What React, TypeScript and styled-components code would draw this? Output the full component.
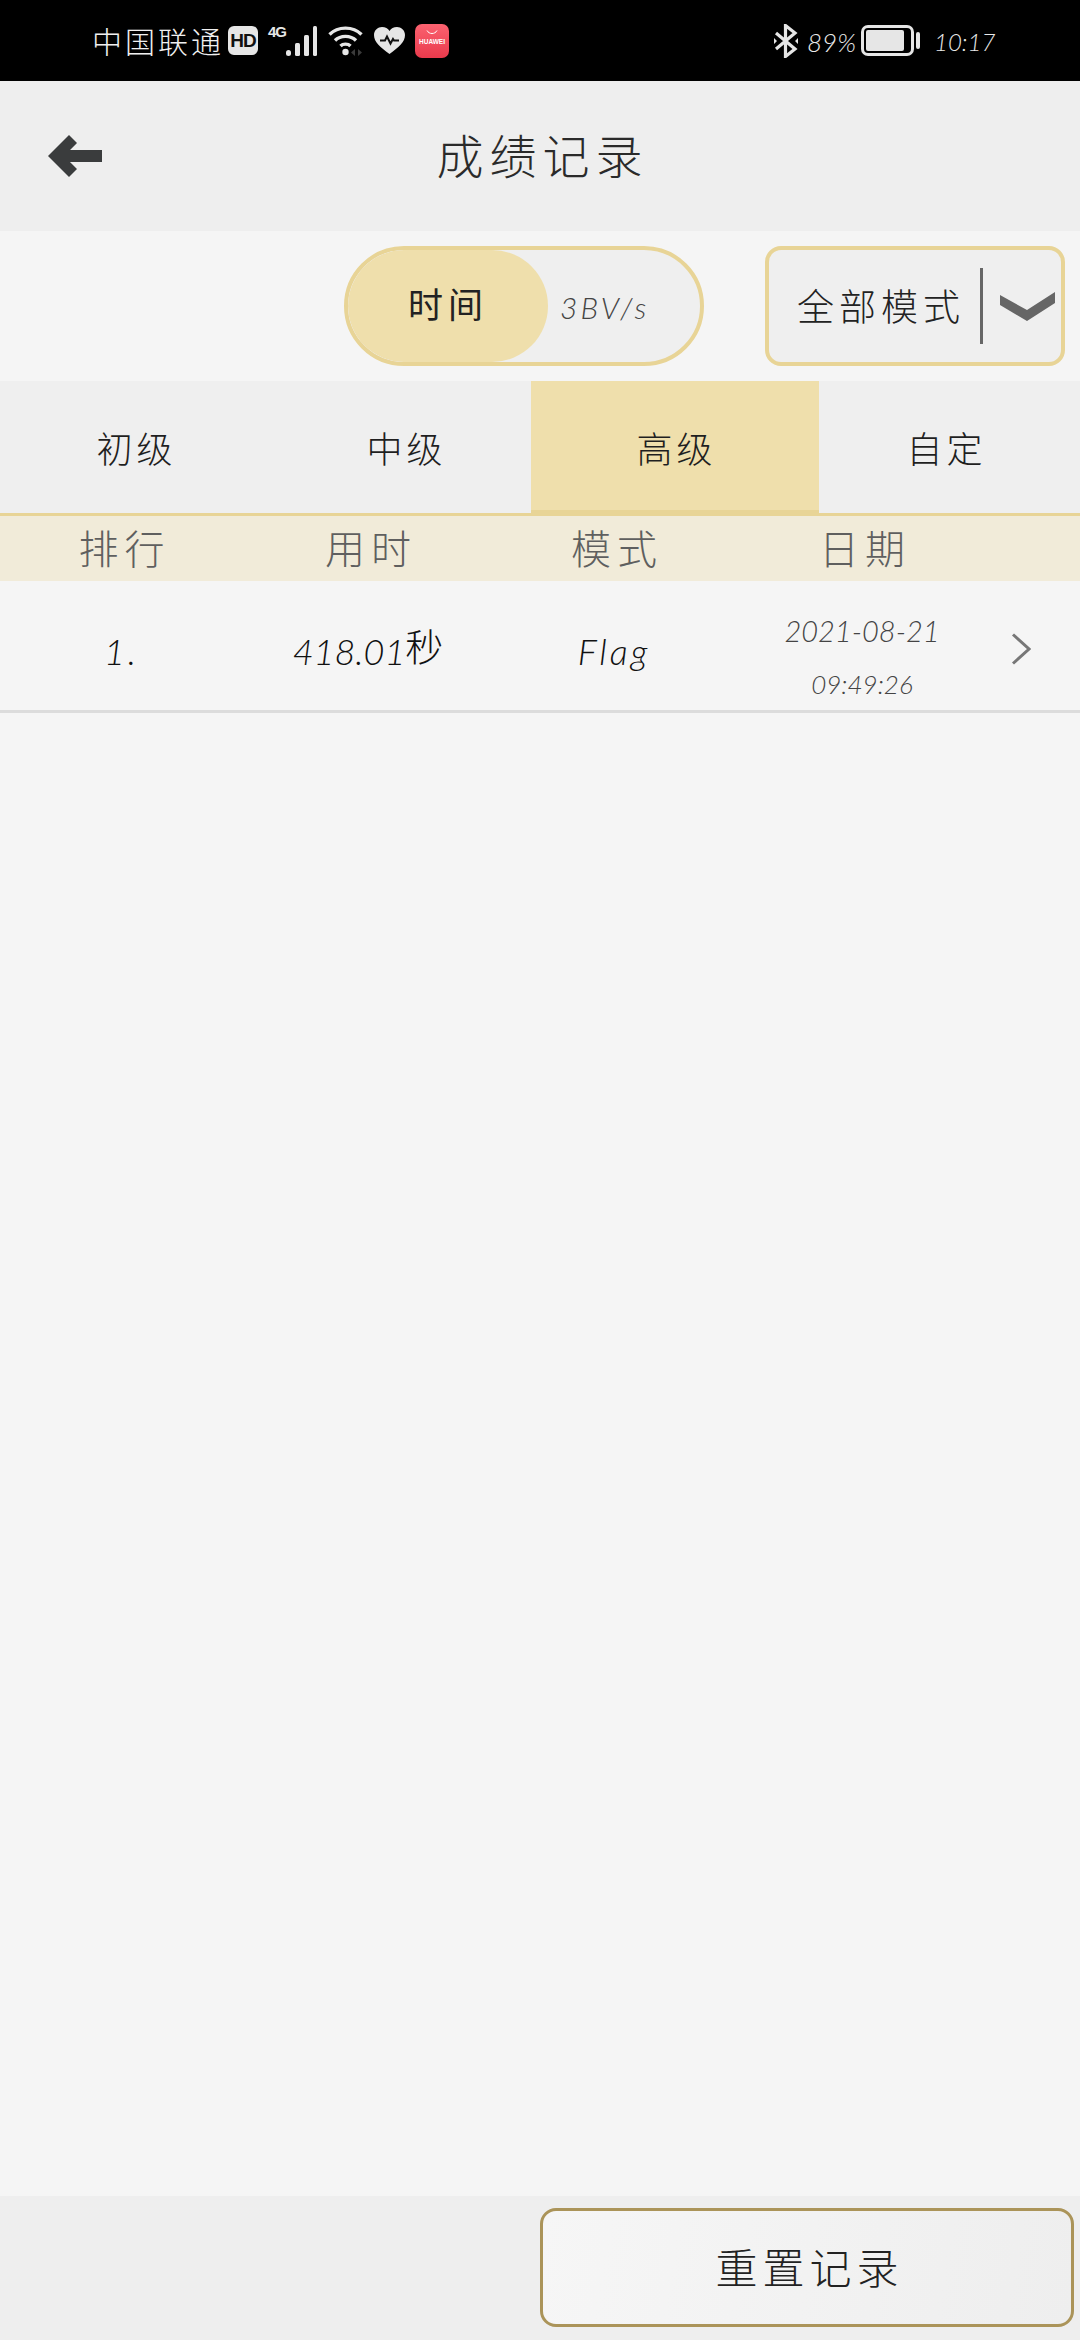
import React from "react";
import styled, { createGlobalStyle } from "styled-components";

const cjk = `"Noto Sans CJK SC", "Noto Sans", sans-serif`;
const latin = `"Lato", "Noto Sans CJK SC", sans-serif`;

const Global = createGlobalStyle`
  html, body { margin: 0; padding: 0; background: #f5f5f5; }
  * { box-sizing: border-box; }
`;

const Page = styled.div`
  width: 1080px;
  height: 2340px;
  display: flex;
  flex-direction: column;
  background: #f5f5f5;
  color: #2c2c2c;
  font-family: ${cjk};
`;

const StatusBar = styled.div`
  height: 81px;
  flex: none;
  background: #000;
  display: flex;
  align-items: center;
  justify-content: space-between;
  padding: 0 89px 0 92px;
`;

const StatusGroup = styled.div`
  display: flex;
  align-items: center;
`;

const Carrier = styled.span`
  width: 136px;
  padding-bottom: 2px;
  font-size: 30px;
  line-height: 38px;
  font-weight: 300;
  letter-spacing: 3px;
  color: #f0f0f0;
  white-space: nowrap;
`;

const HdBadge = styled.span`
  width: 30px;
  height: 29px;
  border-radius: 6px;
  background: #e6e6e6;
  color: #111;
  font: 700 19px/29px "Liberation Sans", sans-serif;
  letter-spacing: -1px;
  text-align: center;
`;

const NetLabel = styled.span`
  align-self: flex-start;
  margin: 3px 0 0 10px;
  width: 18px;
  color: #e6e6e6;
  font: 700 15px/16px "Liberation Sans", sans-serif;
  letter-spacing: -1px;
  white-space: nowrap;
`;

const Svg = styled.svg<{ $ml: number }>`
  display: block;
  flex: none;
  margin-left: ${(p) => p.$ml}px;
`;

const HuaweiTile = styled.div`
  width: 34px;
  height: 34px;
  margin-left: 10px;
  border-radius: 7px;
  background: linear-gradient(180deg, #fb6270, #ea3a4c);
  display: flex;
  flex-direction: column;
  align-items: center;
  padding-top: 6px;
`;

const HuaweiWord = styled.span`
  color: #fff;
  font: 700 6.5px/8px "Liberation Sans", sans-serif;
  margin-top: 3px;
`;

const StatusNum = styled.span<{ $ml: number; $w: number; $size: number }>`
  margin-left: ${(p) => p.$ml}px;
  width: ${(p) => p.$w}px;
  padding-top: 2px;
  color: #eaeaea;
  font: italic 300 ${(p) => p.$size}px/30px ${latin};
  white-space: nowrap;
`;

const Battery = styled.div`
  width: 53px;
  height: 31px;
  margin-left: 10px;
  border: 3px solid #e6e6e6;
  border-radius: 7px;
  padding: 2px 7px 2px 2px;
`;

const BatteryFill = styled.div`
  height: 100%;
  background: #e6e6e6;
  border-radius: 2px;
`;

const BatteryTip = styled.div`
  width: 4px;
  height: 17px;
  margin-left: 2px;
  background: #e6e6e6;
  border-radius: 2px;
`;

const Header = styled.header`
  height: 150px;
  flex: none;
  background: #eee;
  display: flex;
  align-items: center;
  justify-content: center;
  position: relative;
`;

const BackIcon = styled.svg`
  position: absolute;
  left: 48px;
  top: 54px;
`;

const Title = styled.h1`
  margin: -5px 0 0 5px;
  font-size: 47px;
  line-height: 60px;
  font-weight: 300;
  letter-spacing: 6px;
  color: #2a2a2a;
`;

const Controls = styled.div`
  height: 150px;
  flex: none;
  display: flex;
  align-items: center;
  justify-content: flex-end;
  gap: 61px;
  padding-right: 15px;
`;

const Pill = styled.div`
  width: 360px;
  height: 120px;
  border: 4px solid #e8d496;
  border-radius: 60px;
  background: #efefef;
  display: flex;
  align-items: center;
  overflow: hidden;
`;

const Knob = styled.div`
  width: 200px;
  height: 100%;
  border-radius: 56px;
  background: #efdfac;
  display: flex;
  align-items: center;
  justify-content: center;
  padding-bottom: 7px;
  font-size: 35px;
  font-weight: 400;
  letter-spacing: 5px;
  color: #222;
`;

const PillOption = styled.span`
  margin-left: 12px;
  color: #444;
  font: italic 300 30px/40px ${latin};
  letter-spacing: 3px;
  padding-top: 1px;
`;

const Select = styled.div`
  width: 300px;
  height: 120px;
  border: 4px solid #e8d496;
  border-radius: 16px;
  background: #efefef;
  display: flex;
  align-items: center;
`;

const SelectLabel = styled.span`
  width: 211px;
  padding: 0 0 3px 28px;
  font-size: 37px;
  font-weight: 300;
  letter-spacing: 5px;
  color: #222;
  white-space: nowrap;
`;

const SelectDivider = styled.div`
  width: 3px;
  height: 76px;
  background: #666;
`;

const Tabs = styled.nav`
  height: 135px;
  flex: none;
  display: grid;
  grid-template-columns: repeat(4, 270px);
  background: #efefef;
  border-bottom: 3px solid #e8d496;
`;

const Tab = styled.div<{ $active?: boolean }>`
  display: flex;
  align-items: center;
  justify-content: center;
  font-size: 36px;
  font-weight: 300;
  letter-spacing: 4px;
  padding-left: 3px;
  color: #1f1f1f;
  ${(p) =>
    p.$active &&
    `
    margin: 0 -9px;
    background: #efdfac;
    box-shadow: inset 0 -3px 0 #e8d496;
  `}
`;

const Columns = styled.div`
  display: grid;
  grid-template-columns: 243px 250px 242px 254px 1fr;
  align-items: center;
  text-align: center;
`;

const TableHead = styled(Columns)`
  height: 65px;
  flex: none;
  background: #f1ebd9;
  font-size: 40px;
  font-weight: 300;
  letter-spacing: 6px;
  color: #5f5f5f;
`;

const HeadCell = styled.span`
  padding: 0 0 3px 6px;
`;

const Row = styled(Columns)`
  height: 132px;
  flex: none;
  border-bottom: 3px solid #dcdcdc;
  color: #111;
`;

const Cell = styled.div<{ $spacing: number }>`
  padding-top: 10px;
  font: italic 300 36px/48px ${latin};
  letter-spacing: ${(p) => p.$spacing}px;
  white-space: nowrap;
`;

const Seconds = styled.span`
  font: normal 300 38px/40px ${cjk};
  letter-spacing: 0;
  position: relative;
  top: -4px;
`;

const DateCell = styled.div`
  display: flex;
  flex-direction: column;
  align-items: center;
  gap: 18px;
  padding-top: 20px;
  color: #444;
  font-style: italic;
  font-weight: 300;
  font-family: ${latin};
`;

const DateLine = styled.span`
  font-size: 29px;
  line-height: 38px;
`;

const TimeLine = styled.span`
  font-size: 26px;
  line-height: 32px;
`;

const RowArrow = styled.svg`
  display: block;
  margin: 6px 0 0 22px;
`;

const Spacer = styled.main`
  flex: 1;
`;

const Footer = styled.footer`
  height: 144px;
  flex: none;
  background: #eee;
  display: flex;
  justify-content: flex-end;
  padding: 12px 6px 13px 0;
`;

const ResetButton = styled.button`
  width: 534px;
  height: 119px;
  border: 3px solid #ab9459;
  border-radius: 16px;
  background: linear-gradient(100deg, #f6f6f6, #eeeeee);
  font-family: ${cjk};
  font-size: 42px;
  font-weight: 300;
  letter-spacing: 5px;
  color: #222;
  padding: 0 0 4px 5px;
`;

export default function App() {
  return (
    <Page>
      <Global />
      <StatusBar>
        <StatusGroup>
          <Carrier>中国联通</Carrier>
          <HdBadge>HD</HdBadge>
          <NetLabel>4G</NetLabel>
          <Svg $ml={0} width="32" height="30" viewBox="0 0 32 30" fill="#e6e6e6">
            <rect x="0" y="24" width="5" height="6" rx="2.5" />
            <rect x="9" y="17" width="5" height="13" rx="1.5" />
            <rect x="18" y="9" width="5" height="21" rx="1.5" />
            <rect x="27" y="0" width="4" height="30" rx="1.5" />
          </Svg>
          <Svg $ml={10} width="36" height="32" viewBox="0 0 36 32" fill="none" stroke="#e6e6e6" strokeWidth="3.4">
            <path d="M1.5 9.5C10 1 25 1 33.5 9.5" />
            <path d="M7 15.5C12.5 10 22.5 10 28 15.5" />
            <path d="M12.5 21C15 18.5 20 18.5 22.5 21" />
            <circle cx="17.5" cy="27" r="3.2" fill="#e6e6e6" stroke="none" />
            <path d="M27 24v7l-4-3.5zM30 24v7l4-3.5z" fill="#3a3a3a" stroke="none" />
          </Svg>
          <Svg $ml={10} width="31" height="27" viewBox="0 0 31 27">
            <path d="M15.5 27C6 20 0 15 0 8 0 3 4 0 8 0c3.300 0 6 1.500 7.500 4C17 1.500 19.700 0 23 0c4 0 8 3 8 8 0 7-6 12-15.500 19z" fill="#e6e6e6" />
            <path d="M6 13.500h5l2-4 3.500 7 2.500-4.500 1 1.500h5" fill="none" stroke="#111" strokeWidth="2" />
          </Svg>
          <HuaweiTile>
            <svg width="12" height="5" viewBox="0 0 12 5" fill="none" stroke="#fff" strokeWidth="1">
              <path d="M1 0.500C3 4.500 9 4.500 11 0.500" />
            </svg>
            <HuaweiWord>HUAWEI</HuaweiWord>
          </HuaweiTile>
        </StatusGroup>
        <StatusGroup>
          <Svg $ml={0} width="24" height="34" viewBox="0 0 24 34" fill="none" stroke="#e6e6e6" strokeWidth="3.200">
            <path d="M2 9l19 16-9.500 7.500V1.500L21 9 2 25" />
            <path d="M0 14v6l3-3zM24 14v6l-3-3z" fill="#e6e6e6" stroke="none" />
          </Svg>
          <StatusNum $ml={9} $w={44} $size={26}>89%</StatusNum>
          <Battery>
            <BatteryFill />
          </Battery>
          <BatteryTip />
          <StatusNum $ml={14} $w={57} $size={24}>10:17</StatusNum>
        </StatusGroup>
      </StatusBar>
      <Header>
        <BackIcon width="54" height="42" viewBox="0 0 54 42" fill="#3a3c3d">
          <path d="M0 21L21 0l8 8-13 13 13 13-8 8z" />
          <rect x="14" y="15" width="40" height="12" />
        </BackIcon>
        <Title>成绩记录</Title>
      </Header>
      <Controls>
        <Pill>
          <Knob>时间</Knob>
          <PillOption>3BV/s</PillOption>
        </Pill>
        <Select>
          <SelectLabel>全部模式</SelectLabel>
          <SelectDivider />
          <Svg $ml={17} width="55" height="29" viewBox="0 0 55 29" fill="#666">
            <path d="M0 3l27 15L55 0v11L27 29 0 13z" />
          </Svg>
        </Select>
      </Controls>
      <Tabs>
        <Tab>初级</Tab>
        <Tab>中级</Tab>
        <Tab $active>高级</Tab>
        <Tab>自定</Tab>
      </Tabs>
      <TableHead>
        <HeadCell>排行</HeadCell>
        <HeadCell>用时</HeadCell>
        <HeadCell>模式</HeadCell>
        <HeadCell>日期</HeadCell>
      </TableHead>
      <Row>
        <Cell $spacing={3}>1.</Cell>
        <Cell $spacing={0}>
          418.01<Seconds>秒</Seconds>
        </Cell>
        <Cell $spacing={3}>Flag</Cell>
        <DateCell>
          <DateLine>2021-08-21</DateLine>
          <TimeLine>09:49:26</TimeLine>
        </DateCell>
        <RowArrow width="20" height="32" viewBox="0 0 20 32" fill="none" stroke="#777" strokeWidth="3">
          <path d="M2 1.500L18 16 2 30.500" />
        </RowArrow>
      </Row>
      <Spacer />
      <Footer>
        <ResetButton>重置记录</ResetButton>
      </Footer>
    </Page>
  );
}
